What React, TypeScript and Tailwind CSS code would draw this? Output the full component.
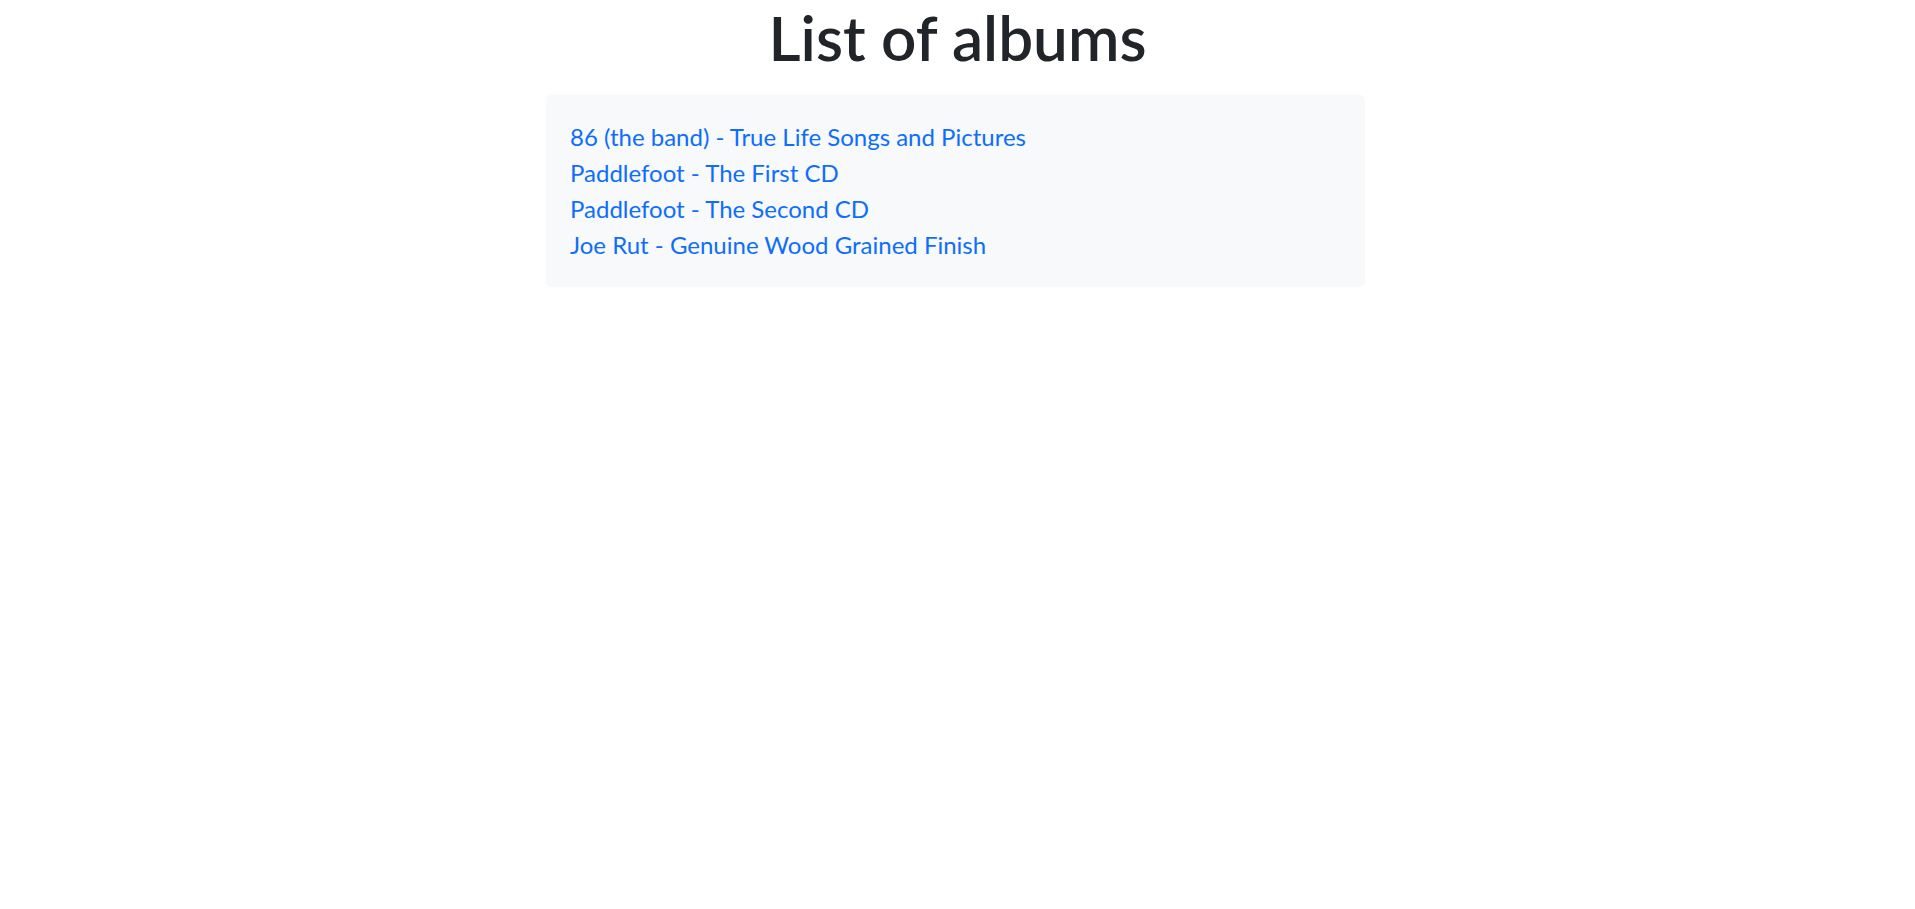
const albums = [
  { id: 1, artist: '86 (the band)', title: 'True Life Songs and Pictures' },
  { id: 2, artist: 'Paddlefoot', title: 'The First CD' },
  { id: 3, artist: 'Paddlefoot', title: 'The Second CD' },
  { id: 4, artist: 'Joe Rut', title: 'Genuine Wood Grained Finish' },
]

export default function App() {
  return (
    <div className="min-h-screen bg-white font-['Lato','Noto_Sans',sans-serif] text-[#212529]">
      <h1 className="text-center text-[62px] font-semibold leading-[74px]">List of albums</h1>
      <div className="mx-auto mt-[21px] w-[819px] -translate-x-[2px] rounded-[5px] bg-[#f8f9fa] p-6">
        <ul className="list-none">
          {albums.map(album => (
            <li key={album.id} className="text-[24px] leading-[36px]">
              <a href="#" className="text-[#0d6efd] no-underline">
                {album.artist} - {album.title}
              </a>
            </li>
          ))}
        </ul>
      </div>
    </div>
  )
}
